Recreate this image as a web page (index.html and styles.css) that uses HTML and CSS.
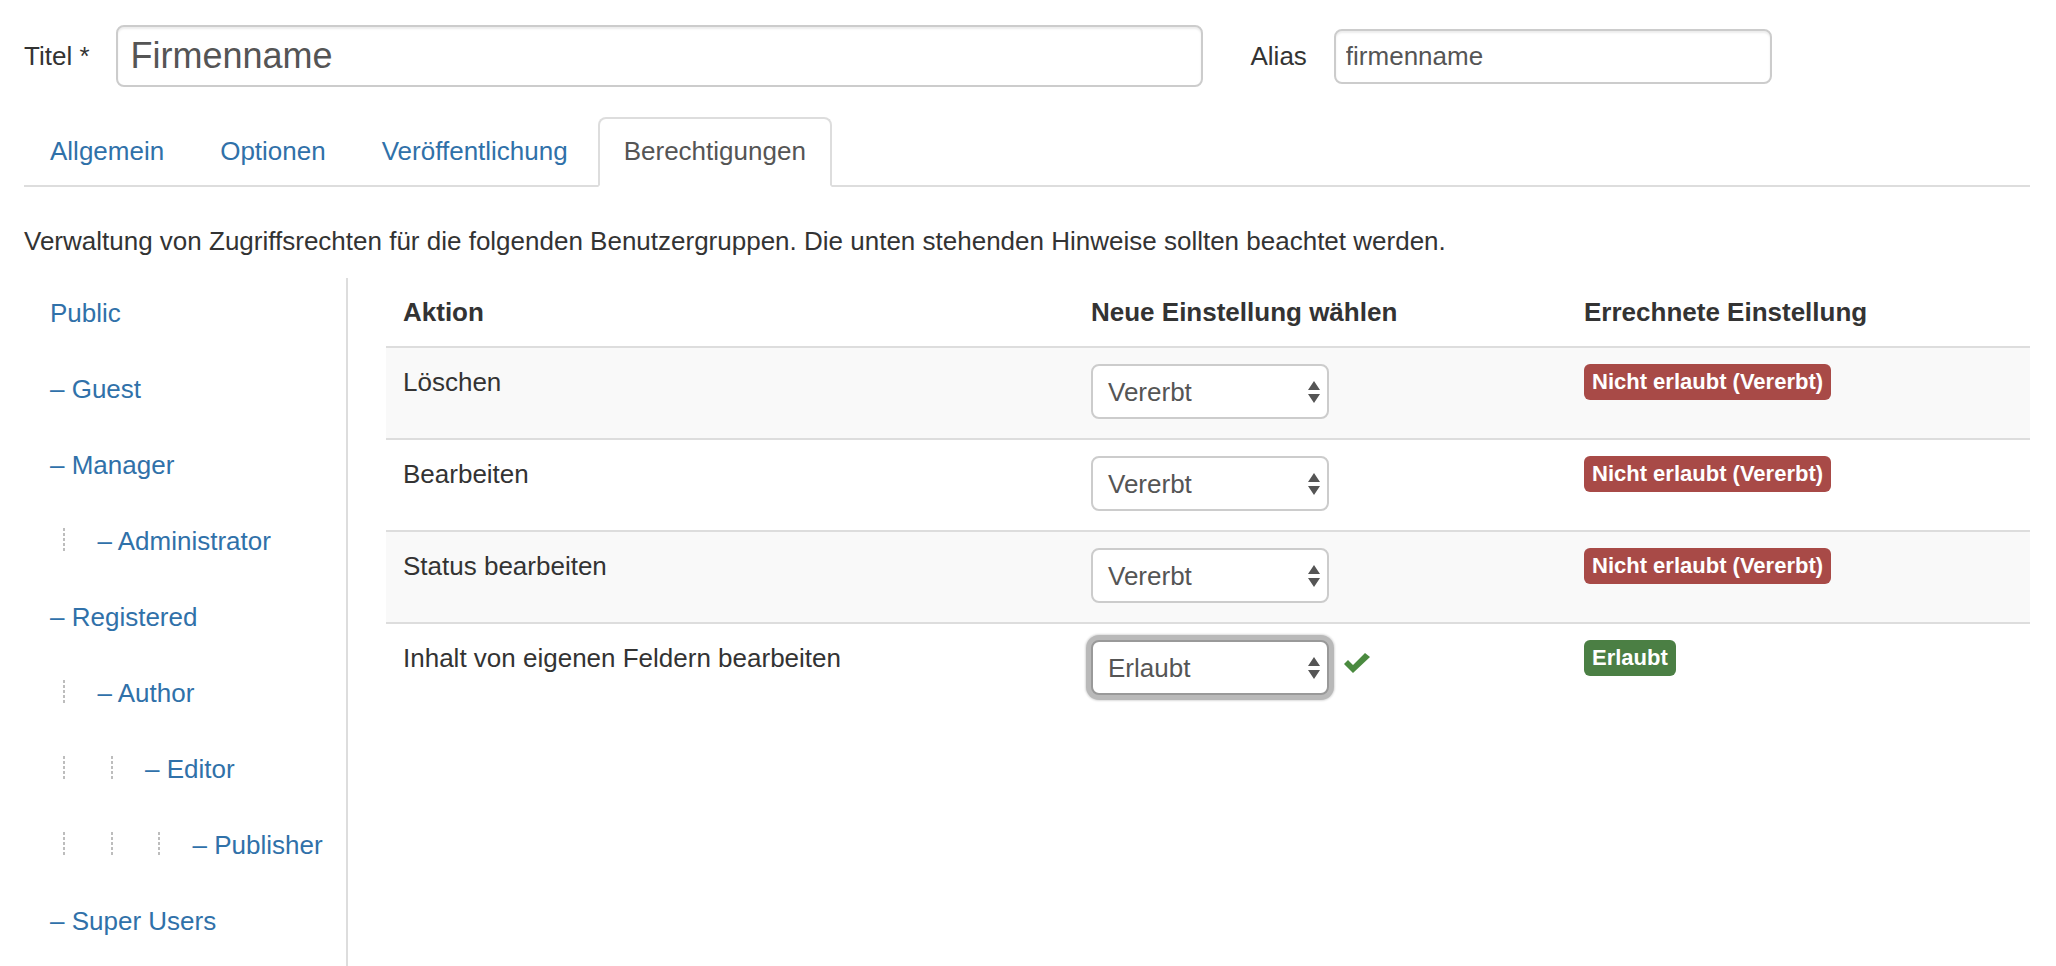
FILE: index.html
```html
<!DOCTYPE html>
<html lang="de">
<head>
<meta charset="utf-8">
<title>Berechtigungen</title>
<link rel="stylesheet" href="styles.css">
</head>
<body>
<div class="page">
  <div class="title-row">
    <label class="lbl lbl-title" for="title">Titel *</label>
    <input id="title" class="inp inp-title" type="text" value="Firmenname">
    <label class="lbl lbl-alias" for="alias">Alias</label>
    <input id="alias" class="inp inp-alias" type="text" value="firmenname">
  </div>

  <ul class="tabs">
    <li><a class="tab" href="#general">Allgemein</a></li>
    <li><a class="tab" href="#options">Optionen</a></li>
    <li><a class="tab" href="#publishing">Veröffentlichung</a></li>
    <li><a class="tab active" href="#permissions">Berechtigungen</a></li>
  </ul>

  <p class="desc">Verwaltung von Zugriffsrechten für die folgenden Benutzergruppen. Die unten stehenden Hinweise sollten beachtet werden.</p>

  <div class="perm">
    <ul class="groups">
      <li><a href="#p1">Public</a></li>
      <li><a href="#p2">– Guest</a></li>
      <li><a href="#p3">– Manager</a></li>
      <li><a href="#p4"><span class="gi"></span>– Administrator</a></li>
      <li><a href="#p5">– Registered</a></li>
      <li><a href="#p6"><span class="gi"></span>– Author</a></li>
      <li><a href="#p7"><span class="gi"></span><span class="gi"></span>– Editor</a></li>
      <li><a href="#p8"><span class="gi"></span><span class="gi"></span><span class="gi"></span>– Publisher</a></li>
      <li><a href="#p9">– Super Users</a></li>
    </ul>

    <table class="rules">
      <colgroup>
        <col class="c-action">
        <col class="c-setting">
        <col class="c-calc">
      </colgroup>
      <thead>
        <tr>
          <th>Aktion</th>
          <th>Neue Einstellung wählen</th>
          <th>Errechnete Einstellung</th>
        </tr>
      </thead>
      <tbody>
        <tr class="odd">
          <td>Löschen</td>
          <td><span class="sel"><span>Vererbt</span><svg class="arr" width="12" height="22" viewBox="0 0 12 22"><path d="M0 9 L6 0 L12 9 Z M0 13 L12 13 L6 22 Z" fill="#555"/></svg></span></td>
          <td><span class="badge badge-red">Nicht erlaubt (Vererbt)</span></td>
        </tr>
        <tr>
          <td>Bearbeiten</td>
          <td><span class="sel"><span>Vererbt</span><svg class="arr" width="12" height="22" viewBox="0 0 12 22"><path d="M0 9 L6 0 L12 9 Z M0 13 L12 13 L6 22 Z" fill="#555"/></svg></span></td>
          <td><span class="badge badge-red">Nicht erlaubt (Vererbt)</span></td>
        </tr>
        <tr class="odd">
          <td>Status bearbeiten</td>
          <td><span class="sel"><span>Vererbt</span><svg class="arr" width="12" height="22" viewBox="0 0 12 22"><path d="M0 9 L6 0 L12 9 Z M0 13 L12 13 L6 22 Z" fill="#555"/></svg></span></td>
          <td><span class="badge badge-red">Nicht erlaubt (Vererbt)</span></td>
        </tr>
        <tr>
          <td>Inhalt von eigenen Feldern bearbeiten</td>
          <td><span class="sel focus"><span>Erlaubt</span><svg class="arr" width="12" height="22" viewBox="0 0 12 22"><path d="M0 9 L6 0 L12 9 Z M0 13 L12 13 L6 22 Z" fill="#555"/></svg></span><svg class="check" width="26" height="20" viewBox="0 0 26 20"><polygon points="0,11 4,7 9,12 21,0 26,4 9,20" fill="#4a8a3f"/></svg></td>
          <td><span class="badge badge-green">Erlaubt</span></td>
        </tr>
      </tbody>
    </table>
  </div>
</div>
</body>
</html>
```

FILE: styles.css
```css
* {
  box-sizing: border-box;
}

html {
  overflow: hidden;
}

html,
body {
  margin: 0;
  background: #fff;
}

body {
  font-family: "Liberation Sans", Arial, Helvetica, sans-serif;
  font-size: 26px;
  line-height: 36px;
  color: #333;
}

.page {
  padding: 25px 26px 0 24px;
}

/* Title / alias row */
.title-row {
  display: flex;
  align-items: center;
  height: 62px;
}

.lbl {
  color: #333;
  white-space: nowrap;
}

.lbl-title {
  margin-right: 26px;
}

.lbl-alias {
  margin-left: 48px;
  margin-right: 27px;
}

.inp {
  font-family: inherit;
  color: #555;
  background: #fff;
  border: 2px solid #ccc;
  border-radius: 8px;
  box-shadow: inset 0 2px 2px rgba(0, 0, 0, 0.075);
  outline: none;
  margin: 0;
}

.inp-title {
  width: 1087px;
  height: 62px;
  font-size: 36px;
  padding: 0 13px;
}

.inp-alias {
  width: 438px;
  height: 55px;
  font-size: 26px;
  padding: 0 10px;
}

/* Tabs */
.tabs {
  list-style: none;
  margin: 30px 0 0;
  padding: 0;
  display: flex;
  border-bottom: 2px solid #ddd;
}

.tab {
  display: block;
  padding: 14px 24px 16px;
  line-height: 36px;
  border: 2px solid transparent;
  border-radius: 8px 8px 0 0;
  margin-right: 4px;
  margin-bottom: -2px;
  color: #3071a9;
  text-decoration: none;
  white-space: nowrap;
}

.tab.active {
  color: #555;
  background: #fff;
  border-color: #ddd #ddd #fff;
}

.desc {
  margin: 36px 0 19px;
}

/* Permissions area */
.perm {
  display: flex;
  align-items: flex-start;
}

.groups {
  list-style: none;
  margin: 0;
  padding: 0 0 4px;
  width: 324px;
  flex: none;
  border-right: 2px solid #ddd;
}

.groups a {
  display: block;
  padding: 17px 0 17px 26px;
  margin-bottom: 6px;
  line-height: 36px;
  color: #3071a9;
  text-decoration: none;
  white-space: nowrap;
}

.gi {
  display: inline-block;
  width: 47.5px;
  height: 24px;
  vertical-align: -2px;
  background: repeating-linear-gradient(to bottom, #bdbdbd 0 3px, transparent 3px 5px) 13px 0 / 2px 100% no-repeat;
}

.rules {
  width: 1644px;
  margin-left: 38px;
  border-collapse: separate;
  border-spacing: 0;
  table-layout: fixed;
}

.c-action {
  width: 688px;
}

.c-setting {
  width: 493px;
}

.c-calc {
  width: 463px;
}

.rules th {
  text-align: left;
  font-weight: bold;
  padding: 16px 17px;
  line-height: 36px;
  vertical-align: bottom;
  color: #333;
}

.rules td {
  padding: 16px 17px 19px;
  border-top: 2px solid #ddd;
  vertical-align: top;
  line-height: 36px;
}

.rules tr.odd td {
  background: #f9f9f9;
}

.sel {
  display: inline-flex;
  align-items: center;
  justify-content: space-between;
  width: 238px;
  height: 55px;
  padding: 0 7px 0 15px;
  border: 2px solid #ccc;
  border-radius: 8px;
  background: #fff;
  color: #555;
  vertical-align: top;
}

.sel.focus {
  border-color: #999;
  box-shadow: 0 0 0 5px #b9b9b9, 0 0 2px 6px #dcdcdc;
}

.arr {
  display: block;
  flex: none;
}

.check {
  display: inline-block;
  vertical-align: top;
  margin: 13px 0 0 15px;
}

.badge {
  display: inline-block;
  vertical-align: top;
  padding: 4px 8px;
  font-size: 22px;
  line-height: 28px;
  font-weight: bold;
  color: #fff;
  border-radius: 6px;
  white-space: nowrap;
}

.badge-red {
  background: #a84a47;
}

.badge-green {
  background: #4b7f44;
}
```
